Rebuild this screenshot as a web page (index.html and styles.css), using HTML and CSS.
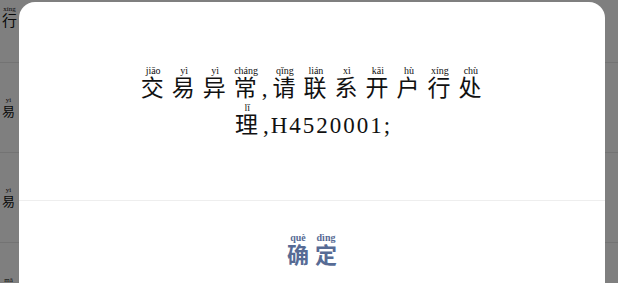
FILE: index.html
```html
<!DOCTYPE html>
<html lang="zh-CN">
<head>
  <meta charset="UTF-8" />
  <title>交易异常</title>
  <link rel="stylesheet" href="styles.css">
</head>
<body>
  <div class="list">
    <div class="row"><ruby>行<rt>xíng</rt></ruby></div>
    <div class="row small"><ruby>易<rt>yì</rt></ruby></div>
    <div class="row small"><ruby>易<rt>yì</rt></ruby></div>
    <div class="row small"><ruby>码<rt>mǎ</rt></ruby></div>
  </div>

  <div class="mask"></div>

  <div class="dialog">
    <div class="dialog-body">
      <p class="message"><ruby>交<rt>jiāo</rt></ruby><ruby>易<rt>yì</rt></ruby><ruby>异<rt>yì</rt></ruby><ruby>常<rt>cháng</rt></ruby>,<ruby>请<rt>qǐng</rt></ruby><ruby>联<rt>lián</rt></ruby><ruby>系<rt>xì</rt></ruby><ruby>开<rt>kāi</rt></ruby><ruby>户<rt>hù</rt></ruby><ruby>行<rt>xíng</rt></ruby><ruby>处<rt>chù</rt></ruby><ruby>理<rt>lǐ</rt></ruby>,H4520001;</p>
    </div>
    <div class="dialog-foot">
      <span class="btn"><ruby>确<rt>què</rt></ruby><ruby>定<rt>dìng</rt></ruby></span>
    </div>
  </div>
</body>
</html>
```

FILE: styles.css
```css
body {
  margin: 0;
  background-color: #fff;
  font-family: "Liberation Serif", "Noto Sans CJK SC", serif;
  overflow: hidden;
}

rt {
  font-family: "Liberation Serif", serif;
  line-height: 1;
  letter-spacing: 0;
}

.list {
  margin-top: -27px;
}

.row {
  height: 89px;
  border-bottom: 1px solid #e6e6e6;
  display: flex;
  align-items: center;
  padding-left: 2px;
  font-size: 15px;
  color: #111;
}

.row rt {
  font-size: 7px;
}

.row.small {
  font-size: 13px;
}

.mask {
  position: fixed;
  inset: 0;
  background-color: rgba(0, 0, 0, 0.5);
}

.dialog {
  position: absolute;
  top: 2px;
  left: 19px;
  right: 13px;
  background-color: #fff;
  border-radius: 16px 16px 0 0;
}

.dialog-body {
  height: 198px;
  display: flex;
  align-items: center;
  justify-content: center;
  border-bottom: 1px solid #eeeeee;
}

.message {
  margin: 7px 0 0;
  width: 356px;
  text-align: center;
  font-size: 23px;
  letter-spacing: 2px;
  line-height: 37px;
  color: #111;
}

.message ruby {
  margin: 0 3px;
}

.message rt {
  font-size: 10px;
}

.dialog-foot {
  height: 100px;
  display: flex;
  align-items: center;
  justify-content: center;
}

.btn {
  font-size: 22px;
  font-weight: bold;
  color: #576b95;
}

.btn ruby {
  margin: 0 3px;
}

.btn rt {
  font-size: 10px;
}
```
